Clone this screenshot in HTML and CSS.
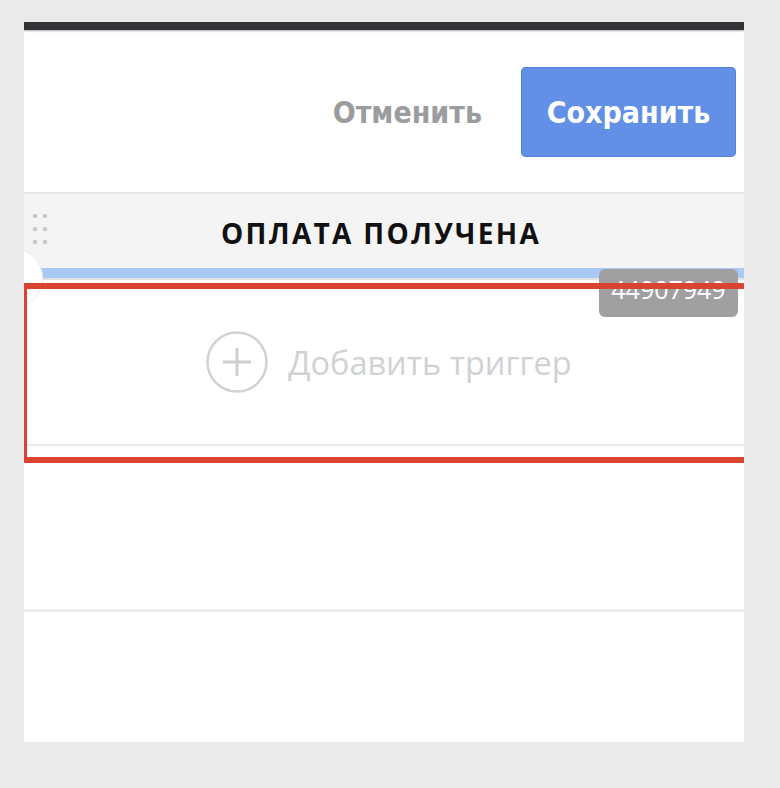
FILE: index.html
```html
<!doctype html>
<html lang="ru">
  <head>
    <meta charset="UTF-8" />
    <meta name="viewport" content="width=device-width, initial-scale=1.0" />
    <title>Триггеры</title>
    <link rel="stylesheet" href="styles.css">
  </head>
  <body>
    <div class="panel">
      <div class="topbar"></div>

      <!-- Actions -->
      <div class="header">
        <button class="cancel">Отменить</button>
        <button class="save">Сохранить</button>
      </div>

      <!-- Status block -->
      <div class="status">
        <svg class="drag" width="16" height="34" viewBox="0 0 16 34">
          <circle cx="3" cy="3" r="2.3" />
          <circle cx="13" cy="3" r="2.3" />
          <circle cx="3" cy="16" r="2.3" />
          <circle cx="13" cy="16" r="2.3" />
          <circle cx="3" cy="29" r="2.3" />
          <circle cx="13" cy="29" r="2.3" />
        </svg>
        <h2>ОПЛАТА ПОЛУЧЕНА</h2>
      </div>
      <div class="progress"></div>
      <div class="knob"></div>
      <div class="badge">44907949</div>

      <div class="trigger">
        <div class="add">
          <svg width="62" height="62" viewBox="0 0 62 62">
            <circle cx="31" cy="31" r="29.5" fill="none" stroke="#d2d2d2" stroke-width="2.5" />
            <path d="M31 17 V45 M17 31 H45" stroke="#cfcfcf" stroke-width="3" />
          </svg>
          <span>Добавить триггер</span>
        </div>
        <div class="highlight"></div>
      </div>

      <div class="spacer"></div>
      <div class="footer"></div>
    </div>
  </body>
</html>
```

FILE: styles.css
```css
body {
  margin: 0;
  background-color: #eaeaea;
  font-family: "Open Sans", Arial, sans-serif;
}
.panel {
  position: relative;
  width: 720px;
  height: 720px;
  margin: 22px 0 0 24px;
  background: white;
  overflow: hidden;
  display: flex;
  flex-direction: column;
}
.topbar {
  height: 8px;
  background: #333538;
  box-shadow: 0 1px 2px rgba(0, 0, 0, 0.35);
  flex-shrink: 0;
}
.header {
  height: 164px;
  flex-shrink: 0;
  display: flex;
  justify-content: flex-end;
  align-items: flex-start;
  padding: 37px 8px 0 0;
  box-sizing: border-box;
  border-bottom: 2px solid #e8e8e8;
}
.header button {
  font-family: "DejaVu Sans Condensed", "DejaVu Sans", sans-serif;
  font-weight: bold;
  font-size: 30px;
  border: none;
  cursor: pointer;
}
.cancel {
  background: none;
  color: #9a9c9e;
  height: 90px;
  padding: 0;
  margin-right: 39px;
}
.save {
  width: 215px;
  height: 90px;
  background-color: #6190e6;
  color: white;
  border-radius: 5px;
  box-shadow: inset 0 0 0 1px #5683d6;
}
.status {
  height: 74px;
  flex-shrink: 0;
  background: #f4f4f4;
  display: flex;
  align-items: center;
  justify-content: center;
  position: relative;
}
.drag {
  position: absolute;
  left: 8px;
  top: 19px;
  fill: #c8c8c8;
}
.status h2 {
  margin: 4px 6px 0 0;
  font-size: 28px;
  font-weight: bold;
  letter-spacing: 2.3px;
  color: #111;
}
.progress {
  height: 10px;
  margin-left: 17px;
  background: #a9c9f5;
  border-bottom: 2px solid #e2e2e2;
  flex-shrink: 0;
}
.knob {
  position: absolute;
  left: -41px;
  top: 226px;
  width: 58px;
  height: 58px;
  border-radius: 50%;
  background: white;
  border: 1px solid #ececec;
}
.badge {
  position: absolute;
  left: 575px;
  top: 247px;
  width: 139px;
  height: 48px;
  border-radius: 6px;
  background: #a0a0a0;
  color: white;
  font-size: 25px;
  line-height: 40px;
  text-align: center;
  overflow: hidden;
  z-index: 1;
}
.trigger {
  position: relative;
  height: 166px;
  flex-shrink: 0;
  border-bottom: 2px solid #e9e9e9;
  box-sizing: border-box;
}
.add {
  display: flex;
  align-items: center;
  justify-content: center;
  gap: 20px;
  height: 100%;
  padding: 0 0 0 10px;
  box-sizing: border-box;
}
.add span {
  font-size: 32.5px;
  color: #cfd2d4;
}
.highlight {
  position: absolute;
  left: -3px;
  top: 3px;
  width: 740px;
  height: 180px;
  border: 6px solid #d9432f;
  box-sizing: border-box;
  z-index: 2;
}
.spacer {
  height: 166px;
  flex-shrink: 0;
  border-bottom: 3px solid #eeeeee;
  box-sizing: border-box;
}
.footer {
  flex: 1;
}
```
